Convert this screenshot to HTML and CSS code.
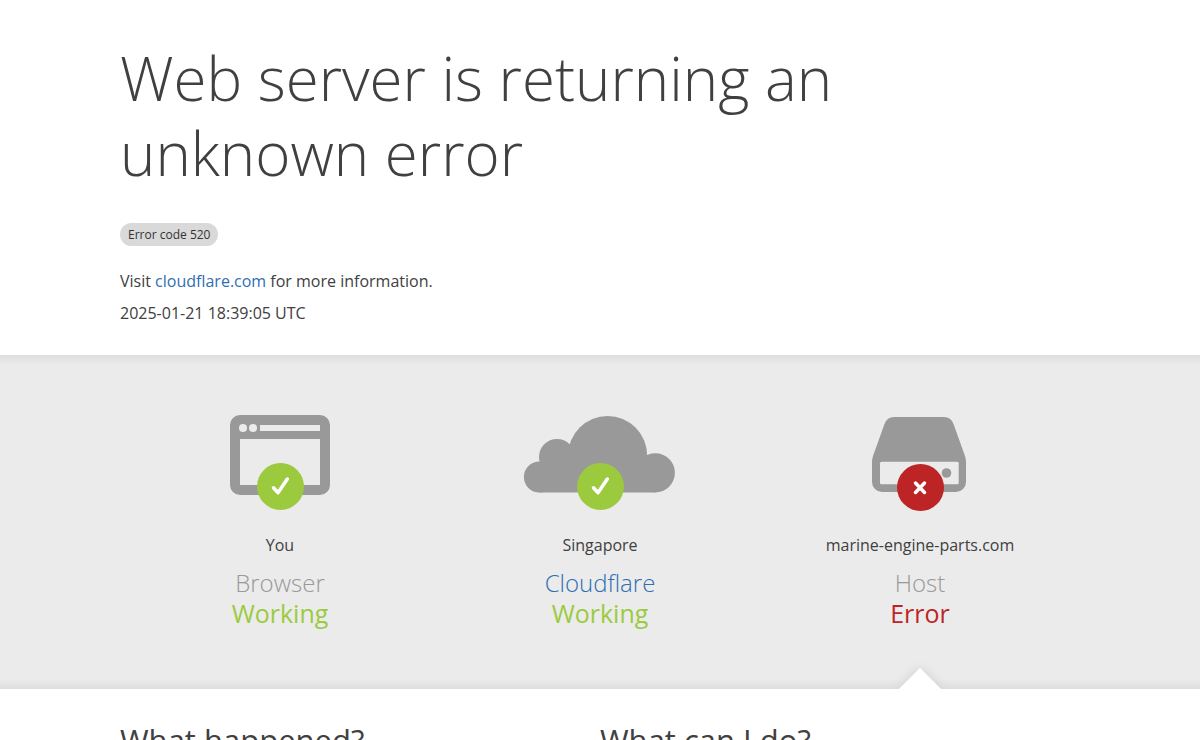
FILE: index.html
```html
<!DOCTYPE html>
<html lang="en">
<head>
    <meta charset="UTF-8" />
    <meta name="viewport" content="width=device-width, initial-scale=1.0" />
    <title>520: Web server is returning an unknown error</title>
    <link rel="stylesheet" href="styles.css">
</head>
<body>
<header class="wrapper error-header">
    <h1>Web server is returning an unknown error</h1>
    <span class="code-label">Error code 520</span>
    <div class="info">Visit <a href="#">cloudflare.com</a> for more information.</div>
    <div class="info">2025-01-21 18:39:05 UTC</div>
</header>

<section class="status-band">
    <div class="wrapper status-list">
        <div class="status">
            <svg class="status-icon" viewBox="0 0 180 110" aria-hidden="true">
                <path fill="#999" fill-rule="evenodd" d="M50 10h80a10 10 0 0 1 10 10v60a10 10 0 0 1-10 10H50a10 10 0 0 1-10-10V20a10 10 0 0 1 10-10zM70 20v6h60v-6zM50 34v46h80V34z" />
                <circle cx="53" cy="23" r="4" fill="#ebebeb" />
                <circle cx="63" cy="23" r="4" fill="#ebebeb" />
                <circle cx="90.5" cy="81.5" r="23.5" fill="#9bca3e" />
                <path class="mark" d="M83.5 82.8L88 87.7L97.3 74" />
            </svg>
            <span class="place">You</span>
            <h3 class="kind">Browser</h3>
            <span class="state working">Working</span>
        </div>
        <div class="status">
            <svg class="status-icon" viewBox="0 0 180 110" aria-hidden="true">
                <g fill="#999">
                    <circle cx="29.3" cy="72" r="15.4" />
                    <circle cx="47" cy="52" r="18" />
                    <circle cx="97.6" cy="50.4" r="39.5" />
                    <circle cx="145.3" cy="67.8" r="19.6" />
                    <path d="M29 87.4V60h28l80-5 8 32.4z" />
                </g>
                <circle cx="90.5" cy="81.5" r="23.5" fill="#9bca3e" />
                <path class="mark" d="M83.5 82.8L88 87.7L97.3 74" />
            </svg>
            <span class="place">Singapore</span>
            <h3 class="kind"><a href="#">Cloudflare</a></h3>
            <span class="state working">Working</span>
        </div>
        <div class="status current">
            <svg class="status-icon" viewBox="0 0 180 110" aria-hidden="true">
                <path fill="#999" d="M64 12h50q7 0 9.5 7l11.5 32q1 3 1 6v20a10 10 0 0 1-10 10H52a10 10 0 0 1-10-10V57q0-3 1-6l11.5-32q2.5-7 9.5-7z" />
                <rect x="50" y="56.7" width="78.7" height="22.5" rx="1.5" fill="#ebebeb" />
                <circle cx="116.5" cy="68" r="4.8" fill="#999" />
                <circle cx="90.5" cy="82.5" r="23.5" fill="#bd2426" />
                <path class="mark" d="M85.5 78l9 9.5M94.5 78l-9 9.5" />
            </svg>
            <span class="place">marine-engine-parts.com</span>
            <h3 class="kind">Host</h3>
            <span class="state error">Error</span>
        </div>
    </div>
</section>

<main class="wrapper details">
    <h2>What happened?</h2>
    <h2>What can I do?</h2>
</main>
</body>
</html>
```

FILE: styles.css
```css
html, body {
    margin: 0;
    padding: 0;
}

body {
    font-family: "Open Sans", "Noto Sans", sans-serif;
    font-size: 16px;
    line-height: 24px;
    color: #404040;
    background: white;
}

h1, h2, h3 {
    margin: 0;
    font-weight: normal;
}

a {
    color: #2f6fb3;
    text-decoration: none;
}

a:hover {
    text-decoration: underline;
}

.wrapper {
    width: 80%;
    max-width: 960px;
    margin: 0 auto;
}

.error-header {
    padding: 41px 0 30px;
}

.error-header h1 {
    max-width: 800px;
    margin-bottom: 32px;
    font-size: 60px;
    font-weight: 300;
    line-height: 75px;
}

.code-label {
    display: block;
    width: fit-content;
    margin-bottom: 23px;
    padding: 0 8px;
    font-size: 12px;
    line-height: 23px;
    color: #333;
    background: #d9d9d9;
    border-radius: 12px;
}

.info {
    margin-bottom: 8px;
}

.info:last-child {
    margin-bottom: 0;
}

/* grey band with the three hops */
.status-band {
    background:
        linear-gradient(to bottom, #dedede, #ebebeb00) top / 100% 10px no-repeat,
        linear-gradient(to top, #dedede, #ebebeb00) bottom / 100% 10px no-repeat,
        #ebebeb;
}

.status-list {
    display: grid;
    grid-template-columns: repeat(3, 1fr);
}

.status {
    position: relative;
    display: flex;
    flex-direction: column;
    align-items: center;
    padding: 50px 0 61px;
    text-align: center;
}

.status-icon {
    width: 180px;
    height: 110px;
    margin-bottom: 18px;
}

.mark {
    fill: none;
    stroke: white;
    stroke-width: 3.5;
    stroke-linecap: round;
    stroke-linejoin: round;
}

.place {
    margin-bottom: 11px;
}

.kind,
.state {
    line-height: 30px;
}

.kind {
    font-size: 24px;
    font-weight: 300;
    color: #999;
}

.state {
    font-size: 25px;
}

.working {
    color: #9bca3e;
}

.error {
    color: #bd2426;
}

/* arrow that points up from the text below */
.current {
    overflow: hidden;
}

.current::after {
    content: '';
    position: absolute;
    bottom: -15px;
    left: 50%;
    width: 30px;
    height: 30px;
    margin-left: -15px;
    background: white;
    box-shadow: 0 0 10px #ccc;
    transform: rotate(45deg);
}

.details {
    display: grid;
    grid-template-columns: 1fr 1fr;
    padding: 32px 0;
}

.details h2 {
    font-size: 31px;
    line-height: 38px;
}
```
